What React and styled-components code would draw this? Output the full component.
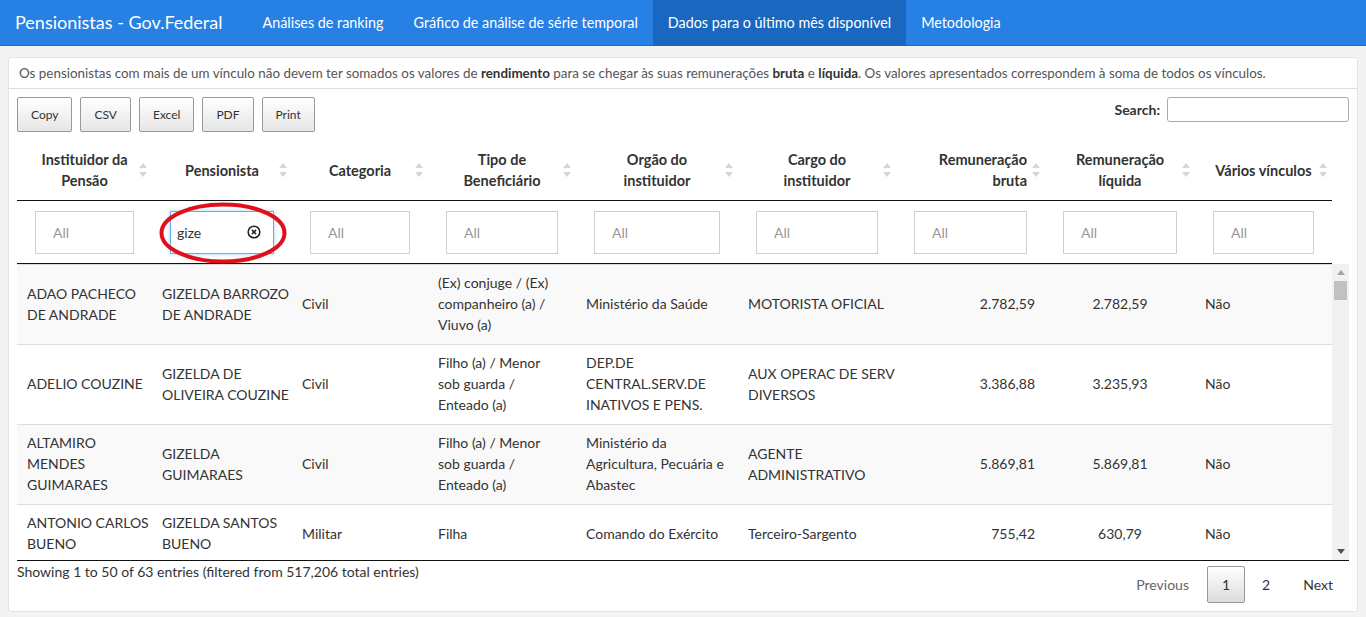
import React from 'react';
import styled, { createGlobalStyle } from 'styled-components';

const FONT = `"Lato", "Noto Sans", sans-serif`;

const Global = createGlobalStyle`
  html, body { margin: 0; padding: 0; }
  body {
    background: #f3f3f3;
    font-family: ${FONT};
    font-size: 14px;
    color: #333;
  }
  * { box-sizing: border-box; }
`;

const Navbar = styled.nav`
  display: flex;
  align-items: stretch;
  height: 46px;
  background: #2780e3;
  border-bottom: 1px solid #1967be;
  color: #fff;
`;

const Brand = styled.div`
  padding: 0 15px;
  margin-right: 10px;
  font-size: 18px;
  line-height: 45px;
  white-space: nowrap;
`;

const NavLink = styled.a`
  display: block;
  padding: 0 15px;
  font-size: 14.35px;
  line-height: 45px;
  color: #fff;
  text-decoration: none;
  white-space: nowrap;
  background: ${(p) => (p.$active ? '#1967be' : 'transparent')};
`;

const Main = styled.main`
  padding: 11px 8px 0 8px;
`;

const Panel = styled.section`
  background: #fff;
  border: 1px solid #e3e3e3;
  border-radius: 3px;
`;

const Note = styled.div`
  padding: 5px 10px;
  line-height: 20px;
  font-size: 13.4px;
  color: #555;
  border-bottom: 1px solid #ddd;
  white-space: nowrap;
  b { color: #333; }
`;

const Content = styled.div`
  padding: 8px;
`;

const Toolbar = styled.div`
  display: flex;
  justify-content: space-between;
  align-items: flex-start;
  margin-bottom: 8px;
`;

const ButtonGroup = styled.div`
  display: flex;
  gap: 8px;
`;

const ExportButton = styled.button`
  height: 35px;
  padding: 0 13px;
  font-family: ${FONT};
  font-size: 12px;
  color: #333;
  border: 1px solid #999;
  border-radius: 2px;
  background: linear-gradient(to bottom, #ffffff 0%, #e6e6e6 100%);
  cursor: pointer;
`;

const SearchBox = styled.label`
  display: flex;
  align-items: center;
  gap: 7px;
  font-weight: 700;
  font-size: 14px;
  color: #333;
`;

const SearchInput = styled.input`
  width: 182px;
  height: 25px;
  border: 1px solid #aaa;
  border-radius: 3px;
  font-family: ${FONT};
  padding: 0 5px;
`;

const TableFrame = styled.div`
  border-bottom: 1px solid #111;
`;

const HeadWrap = styled.div`
  width: 1315px;
`;

const Table = styled.table`
  width: 1315px;
  table-layout: fixed;
  border-collapse: separate;
  border-spacing: 0;
`;

const Th = styled.th`
  position: relative;
  height: 61px;
  padding: 9px 18px 9px;
  line-height: 21px;
  font-size: 14.5px;
  font-weight: 700;
  color: #333;
  text-align: ${(p) => p.$align || 'center'};
  border-bottom: 1px solid #111;
  white-space: nowrap;
  vertical-align: middle;
`;

const FilterCell = styled.td`
  position: relative;
  height: 63px;
  padding: 10px 18px 9px;
  border-bottom: 1px solid #111;
  vertical-align: middle;
`;

const FilterInput = styled.input`
  display: block;
  width: 100%;
  height: 43px;
  border: 1px solid #ccc;
  font-family: ${FONT};
  font-size: 14px;
  color: #333;
  padding: 0 6px 0 ${(p) => (p.$focused ? '6px' : '17px')};
  outline: none;
  border-color: ${(p) => (p.$focused ? '#66afe9' : '#cfcfcf')};
  box-shadow: ${(p) => (p.$focused ? '0 0 4px rgba(102,175,233,0.6)' : 'none')};
  &::placeholder { color: #999; }
`;

const SortIcon = styled.span`
  position: absolute;
  right: 5px;
  top: 50%;
  width: 8px;
  height: 14px;
  margin-top: -7px;
  display: flex;
  flex-direction: column;
  justify-content: space-between;
  align-items: center;
`;

const ClearIcon = styled.span`
  position: absolute;
  right: 31px;
  top: 50%;
  margin-top: -7px;
  width: 14px;
  height: 14px;
  display: flex;
`;

const Annotation = styled.svg`
  position: absolute;
  left: 6px;
  top: -1px;
  pointer-events: none;
  overflow: visible;
`;

const ScrollArea = styled.div`
  display: flex;
  height: 296px;
`;

const Viewport = styled.div`
  width: 1315px;
  height: 100%;
  overflow: hidden;
`;

const Scrollbar = styled.div`
  width: 17px;
  height: 100%;
  background: #f1f1f1;
  display: flex;
  flex-direction: column;
`;

const ScrollArrow = styled.div`
  height: 17px;
  display: flex;
  align-items: center;
  justify-content: center;
`;

const ScrollTrack = styled.div`
  flex: 1;
  padding: 0 2px;
`;

const ScrollThumb = styled.div`
  height: 19px;
  background: #c1c1c1;
`;

const Row = styled.tr`
  background: ${(p) => (p.$odd ? '#f9f9f9' : '#fff')};
`;

const Td = styled.td`
  padding: 7px 10px 9px;
  line-height: 21px;
  font-size: 14px;
  color: #333;
  border-top: 1px solid #ddd;
  text-align: ${(p) => p.$align || 'left'};
  vertical-align: middle;
`;

const Line = styled.div`
  white-space: nowrap;
`;

const Footer = styled.div`
  display: flex;
  justify-content: space-between;
  align-items: flex-start;
`;

const Info = styled.div`
  padding-top: 0;
  line-height: 21px;
  font-size: 14px;
  color: #333;
`;

const Pager = styled.div`
  display: flex;
  padding-top: 5px;
`;

const PageButton = styled.a`
  display: block;
  margin-left: 2px;
  padding: 7px ${(p) => (p.$digit ? '14px' : '15px')};
  line-height: 21px;
  font-size: 14px;
  border: 1px solid ${(p) => (p.$current ? '#979797' : 'transparent')};
  border-radius: 2px;
  color: ${(p) => (p.$disabled ? '#666' : '#333')};
  background: ${(p) =>
    p.$current ? 'linear-gradient(to bottom, #ffffff 0%, #dcdcdc 100%)' : 'transparent'};
  cursor: pointer;
`;

const COLS = [135, 140, 136, 148, 162, 158, 149, 150, 137];

const HEADERS = [
  { lines: ['Instituidor da', 'Pensão'] },
  { lines: ['Pensionista'] },
  { lines: ['Categoria'] },
  { lines: ['Tipo de', 'Beneficiário'] },
  { lines: ['Orgão do', 'instituidor'] },
  { lines: ['Cargo do', 'instituidor'] },
  { lines: ['Remuneração', 'bruta'], align: 'right' },
  { lines: ['Remuneração', 'líquida'] },
  { lines: ['Vários vínculos'] },
];

const ALIGN = ['left', 'left', 'left', 'left', 'left', 'left', 'right', 'center', 'left'];

const ROWS = [
  [
    ['ADAO PACHECO', 'DE ANDRADE'],
    ['GIZELDA BARROZO', 'DE ANDRADE'],
    ['Civil'],
    ['(Ex) conjuge / (Ex)', 'companheiro (a) /', 'Viuvo (a)'],
    ['Ministério da Saúde'],
    ['MOTORISTA OFICIAL'],
    ['2.782,59'],
    ['2.782,59'],
    ['Não'],
  ],
  [
    ['ADELIO COUZINE'],
    ['GIZELDA DE', 'OLIVEIRA COUZINE'],
    ['Civil'],
    ['Filho (a) / Menor', 'sob guarda /', 'Enteado (a)'],
    ['DEP.DE', 'CENTRAL.SERV.DE', 'INATIVOS E PENS.'],
    ['AUX OPERAC DE SERV', 'DIVERSOS'],
    ['3.386,88'],
    ['3.235,93'],
    ['Não'],
  ],
  [
    ['ALTAMIRO', 'MENDES', 'GUIMARAES'],
    ['GIZELDA', 'GUIMARAES'],
    ['Civil'],
    ['Filho (a) / Menor', 'sob guarda /', 'Enteado (a)'],
    ['Ministério da', 'Agricultura, Pecuária e', 'Abastec'],
    ['AGENTE', 'ADMINISTRATIVO'],
    ['5.869,81'],
    ['5.869,81'],
    ['Não'],
  ],
  [
    ['ANTONIO CARLOS', 'BUENO'],
    ['GIZELDA SANTOS', 'BUENO'],
    ['Militar'],
    ['Filha'],
    ['Comando do Exército'],
    ['Terceiro-Sargento'],
    ['755,42'],
    ['630,79'],
    ['Não'],
  ],
];

const Triangle = ({ up, color = '#d6d6d6' }) => (
  <svg width="8" height="5" viewBox="0 0 8 5">
    <polygon points={up ? '0,5 4,0 8,5' : '0,0 8,0 4,5'} fill={color} />
  </svg>
);

const Cols = () => (
  <colgroup>
    {COLS.map((w, i) => (
      <col key={i} style={{ width: w }} />
    ))}
  </colgroup>
);

export default function App() {
  return (
    <>
      <Global />
      <Navbar>
        <Brand>Pensionistas - Gov.Federal</Brand>
        <NavLink>Análises de ranking</NavLink>
        <NavLink>Gráfico de análise de série temporal</NavLink>
        <NavLink $active>Dados para o último mês disponível</NavLink>
        <NavLink>Metodologia</NavLink>
      </Navbar>
      <Main>
        <Panel>
          <Note>
            Os pensionistas com mais de um vínculo não devem ter somados os valores de <b>rendimento</b> para
            se chegar às suas remunerações <b>bruta</b> e <b>líquida</b>. Os valores apresentados correspondem
            à soma de todos os vínculos.
          </Note>
          <Content>
            <Toolbar>
              <ButtonGroup>
                {['Copy', 'CSV', 'Excel', 'PDF', 'Print'].map((b) => (
                  <ExportButton key={b}>{b}</ExportButton>
                ))}
              </ButtonGroup>
              <SearchBox>
                Search:
                <SearchInput type="search" />
              </SearchBox>
            </Toolbar>
            <TableFrame>
              <HeadWrap>
                <Table>
                  <Cols />
                  <thead>
                    <tr>
                      {HEADERS.map((h, i) => (
                        <Th key={i} $align={h.align}>
                          {h.lines.map((l) => (
                            <Line key={l}>{l}</Line>
                          ))}
                          <SortIcon>
                            <Triangle up />
                            <Triangle />
                          </SortIcon>
                        </Th>
                      ))}
                    </tr>
                    <tr>
                      {HEADERS.map((h, i) => (
                        <FilterCell key={i}>
                          {i === 1 ? (
                            <>
                              <FilterInput $focused defaultValue="gize" />
                              <ClearIcon>
                                <svg width="14" height="14" viewBox="0 0 14 14">
                                  <circle cx="7" cy="7" r="5.8" fill="none" stroke="#222" strokeWidth="1.6" />
                                  <path d="M4.9 4.9 L9.1 9.1 M9.1 4.9 L4.9 9.1" stroke="#222" strokeWidth="1.5" />
                                </svg>
                              </ClearIcon>
                              <Annotation width="130" height="62" viewBox="0 0 130 62">
                                <ellipse cx="65" cy="33" rx="61.5" ry="28.5" fill="none" stroke="#e0101b" strokeWidth="4" />
                              </Annotation>
                            </>
                          ) : (
                            <FilterInput placeholder="All" />
                          )}
                        </FilterCell>
                      ))}
                    </tr>
                  </thead>
                </Table>
              </HeadWrap>
              <ScrollArea>
                <Viewport>
                  <Table>
                    <Cols />
                    <tbody>
                      {ROWS.map((r, ri) => (
                        <Row key={ri} $odd={ri % 2 === 0}>
                          {r.map((cell, ci) => (
                            <Td key={ci} $align={ALIGN[ci]}>
                              {cell.map((l, li) => (
                                <Line key={li}>{l}</Line>
                              ))}
                            </Td>
                          ))}
                        </Row>
                      ))}
                    </tbody>
                  </Table>
                </Viewport>
                <Scrollbar>
                  <ScrollArrow>
                    <Triangle up color="#a3a3a3" />
                  </ScrollArrow>
                  <ScrollTrack>
                    <ScrollThumb />
                  </ScrollTrack>
                  <ScrollArrow>
                    <Triangle color="#505050" />
                  </ScrollArrow>
                </Scrollbar>
              </ScrollArea>
            </TableFrame>
            <Footer>
              <Info>Showing 1 to 50 of 63 entries (filtered from 517,206 total entries)</Info>
              <Pager>
                <PageButton $disabled>Previous</PageButton>
                <PageButton $current $digit>1</PageButton>
                <PageButton $digit>2</PageButton>
                <PageButton>Next</PageButton>
              </Pager>
            </Footer>
          </Content>
        </Panel>
      </Main>
    </>
  );
}
